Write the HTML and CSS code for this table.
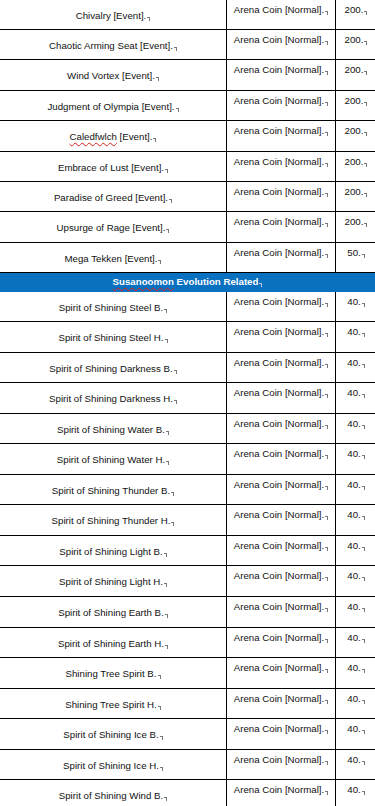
FILE: index.html
```html
<!DOCTYPE html>
<html>
<head>
<meta charset="utf-8">
<link rel="stylesheet" href="styles.css">
</head>
<body>
<div class="sheet">
  <div class="group top">
    <div class="row"><div class="c1">Chivalry [Event].<i class="pm"></i></div><div class="c2">Arena Coin [Normal].<i class="pm"></i></div><div class="c3">200.<i class="pm"></i></div></div>
    <div class="row"><div class="c1">Chaotic Arming Seat [Event].<i class="pm"></i></div><div class="c2">Arena Coin [Normal].<i class="pm"></i></div><div class="c3">200.<i class="pm"></i></div></div>
    <div class="row"><div class="c1">Wind Vortex [Event].<i class="pm"></i></div><div class="c2">Arena Coin [Normal].<i class="pm"></i></div><div class="c3">200.<i class="pm"></i></div></div>
    <div class="row"><div class="c1">Judgment of Olympia [Event].<i class="pm"></i></div><div class="c2">Arena Coin [Normal].<i class="pm"></i></div><div class="c3">200.<i class="pm"></i></div></div>
    <div class="row"><div class="c1"><span class="sp">Caledfwlch</span> [Event].<i class="pm"></i></div><div class="c2">Arena Coin [Normal].<i class="pm"></i></div><div class="c3">200.<i class="pm"></i></div></div>
    <div class="row"><div class="c1">Embrace of Lust [Event].<i class="pm"></i></div><div class="c2">Arena Coin [Normal].<i class="pm"></i></div><div class="c3">200.<i class="pm"></i></div></div>
    <div class="row"><div class="c1">Paradise of Greed [Event].<i class="pm"></i></div><div class="c2">Arena Coin [Normal].<i class="pm"></i></div><div class="c3">200.<i class="pm"></i></div></div>
    <div class="row"><div class="c1">Upsurge of Rage [Event].<i class="pm"></i></div><div class="c2">Arena Coin [Normal].<i class="pm"></i></div><div class="c3">200.<i class="pm"></i></div></div>
    <div class="row"><div class="c1">Mega Tekken [Event].<i class="pm"></i></div><div class="c2">Arena Coin [Normal].<i class="pm"></i></div><div class="c3">50.<i class="pm"></i></div></div>
  </div>
  <div class="band"><span class="sp">Susanoomon</span> Evolution Related<i class="pm pm-light"></i></div>
  <div class="group bottom">
    <div class="row"><div class="c1">Spirit of Shining Steel B.<i class="pm"></i></div><div class="c2">Arena Coin [Normal].<i class="pm"></i></div><div class="c3">40.<i class="pm"></i></div></div>
    <div class="row"><div class="c1">Spirit of Shining Steel H.<i class="pm"></i></div><div class="c2">Arena Coin [Normal].<i class="pm"></i></div><div class="c3">40.<i class="pm"></i></div></div>
    <div class="row"><div class="c1">Spirit of Shining Darkness B.<i class="pm"></i></div><div class="c2">Arena Coin [Normal].<i class="pm"></i></div><div class="c3">40.<i class="pm"></i></div></div>
    <div class="row"><div class="c1">Spirit of Shining Darkness H.<i class="pm"></i></div><div class="c2">Arena Coin [Normal].<i class="pm"></i></div><div class="c3">40.<i class="pm"></i></div></div>
    <div class="row"><div class="c1">Spirit of Shining Water B.<i class="pm"></i></div><div class="c2">Arena Coin [Normal].<i class="pm"></i></div><div class="c3">40.<i class="pm"></i></div></div>
    <div class="row"><div class="c1">Spirit of Shining Water H.<i class="pm"></i></div><div class="c2">Arena Coin [Normal].<i class="pm"></i></div><div class="c3">40.<i class="pm"></i></div></div>
    <div class="row"><div class="c1">Spirit of Shining Thunder B.<i class="pm"></i></div><div class="c2">Arena Coin [Normal].<i class="pm"></i></div><div class="c3">40.<i class="pm"></i></div></div>
    <div class="row"><div class="c1">Spirit of Shining Thunder H.<i class="pm"></i></div><div class="c2">Arena Coin [Normal].<i class="pm"></i></div><div class="c3">40.<i class="pm"></i></div></div>
    <div class="row"><div class="c1">Spirit of Shining Light B.<i class="pm"></i></div><div class="c2">Arena Coin [Normal].<i class="pm"></i></div><div class="c3">40.<i class="pm"></i></div></div>
    <div class="row"><div class="c1">Spirit of Shining Light H.<i class="pm"></i></div><div class="c2">Arena Coin [Normal].<i class="pm"></i></div><div class="c3">40.<i class="pm"></i></div></div>
    <div class="row"><div class="c1">Spirit of Shining Earth B.<i class="pm"></i></div><div class="c2">Arena Coin [Normal].<i class="pm"></i></div><div class="c3">40.<i class="pm"></i></div></div>
    <div class="row"><div class="c1">Spirit of Shining Earth H.<i class="pm"></i></div><div class="c2">Arena Coin [Normal].<i class="pm"></i></div><div class="c3">40.<i class="pm"></i></div></div>
    <div class="row"><div class="c1">Shining Tree Spirit B.<i class="pm"></i></div><div class="c2">Arena Coin [Normal].<i class="pm"></i></div><div class="c3">40.<i class="pm"></i></div></div>
    <div class="row"><div class="c1">Shining Tree Spirit H.<i class="pm"></i></div><div class="c2">Arena Coin [Normal].<i class="pm"></i></div><div class="c3">40.<i class="pm"></i></div></div>
    <div class="row"><div class="c1">Spirit of Shining Ice B.<i class="pm"></i></div><div class="c2">Arena Coin [Normal].<i class="pm"></i></div><div class="c3">40.<i class="pm"></i></div></div>
    <div class="row"><div class="c1">Spirit of Shining Ice H.<i class="pm"></i></div><div class="c2">Arena Coin [Normal].<i class="pm"></i></div><div class="c3">40.<i class="pm"></i></div></div>
    <div class="row"><div class="c1">Spirit of Shining Wind B.<i class="pm"></i></div><div class="c2">Arena Coin [Normal].<i class="pm"></i></div><div class="c3">40.<i class="pm"></i></div></div>
  </div>
</div>
</body>
</html>
```

FILE: styles.css
```css
html, body {
  margin: 0;
  padding: 0;
  background: #ffffff;
}

body {
  font-family: "Liberation Sans", Arial, sans-serif;
  font-size: 9.7px;
  color: #111111;
  overflow: hidden;
}

.sheet {
  width: 375px;
  height: 806px;
  overflow: hidden;
}

.group.top {
  margin-top: -0.4px;
}

.row {
  display: grid;
  grid-template-columns: 226px 109px 1fr;
  box-sizing: border-box;
  border-bottom: 1px solid #000000;
}

.top .row {
  height: 30.4px;
}

.bottom .row {
  height: 30.55px;
}

.c1 {
  text-align: center;
  padding-top: 9px;
  line-height: 13px;
  white-space: nowrap;
}

.c2,
.c3 {
  border-left: 1px solid #000000;
  text-align: center;
  padding-top: 3px;
  line-height: 13px;
  white-space: nowrap;
}

.c3 {
  padding-left: 1px;
}

.pm {
  display: inline-block;
  width: 2px;
  height: 3px;
  margin-left: 1px;
  border-top: 1px solid #777777;
  border-right: 1px solid #777777;
  vertical-align: -2px;
}

.pm-light {
  border-color: #b8c8e0;
}

.sp {
  text-decoration: underline wavy #e0201a;
  text-decoration-thickness: 1px;
  text-underline-offset: 2px;
}

.band {
  height: 18.4px;
  box-sizing: border-box;
  background: #0a70c0;
  color: #ffffff;
  font-weight: bold;
  text-align: center;
  line-height: 18px;
  white-space: nowrap;
}
```
